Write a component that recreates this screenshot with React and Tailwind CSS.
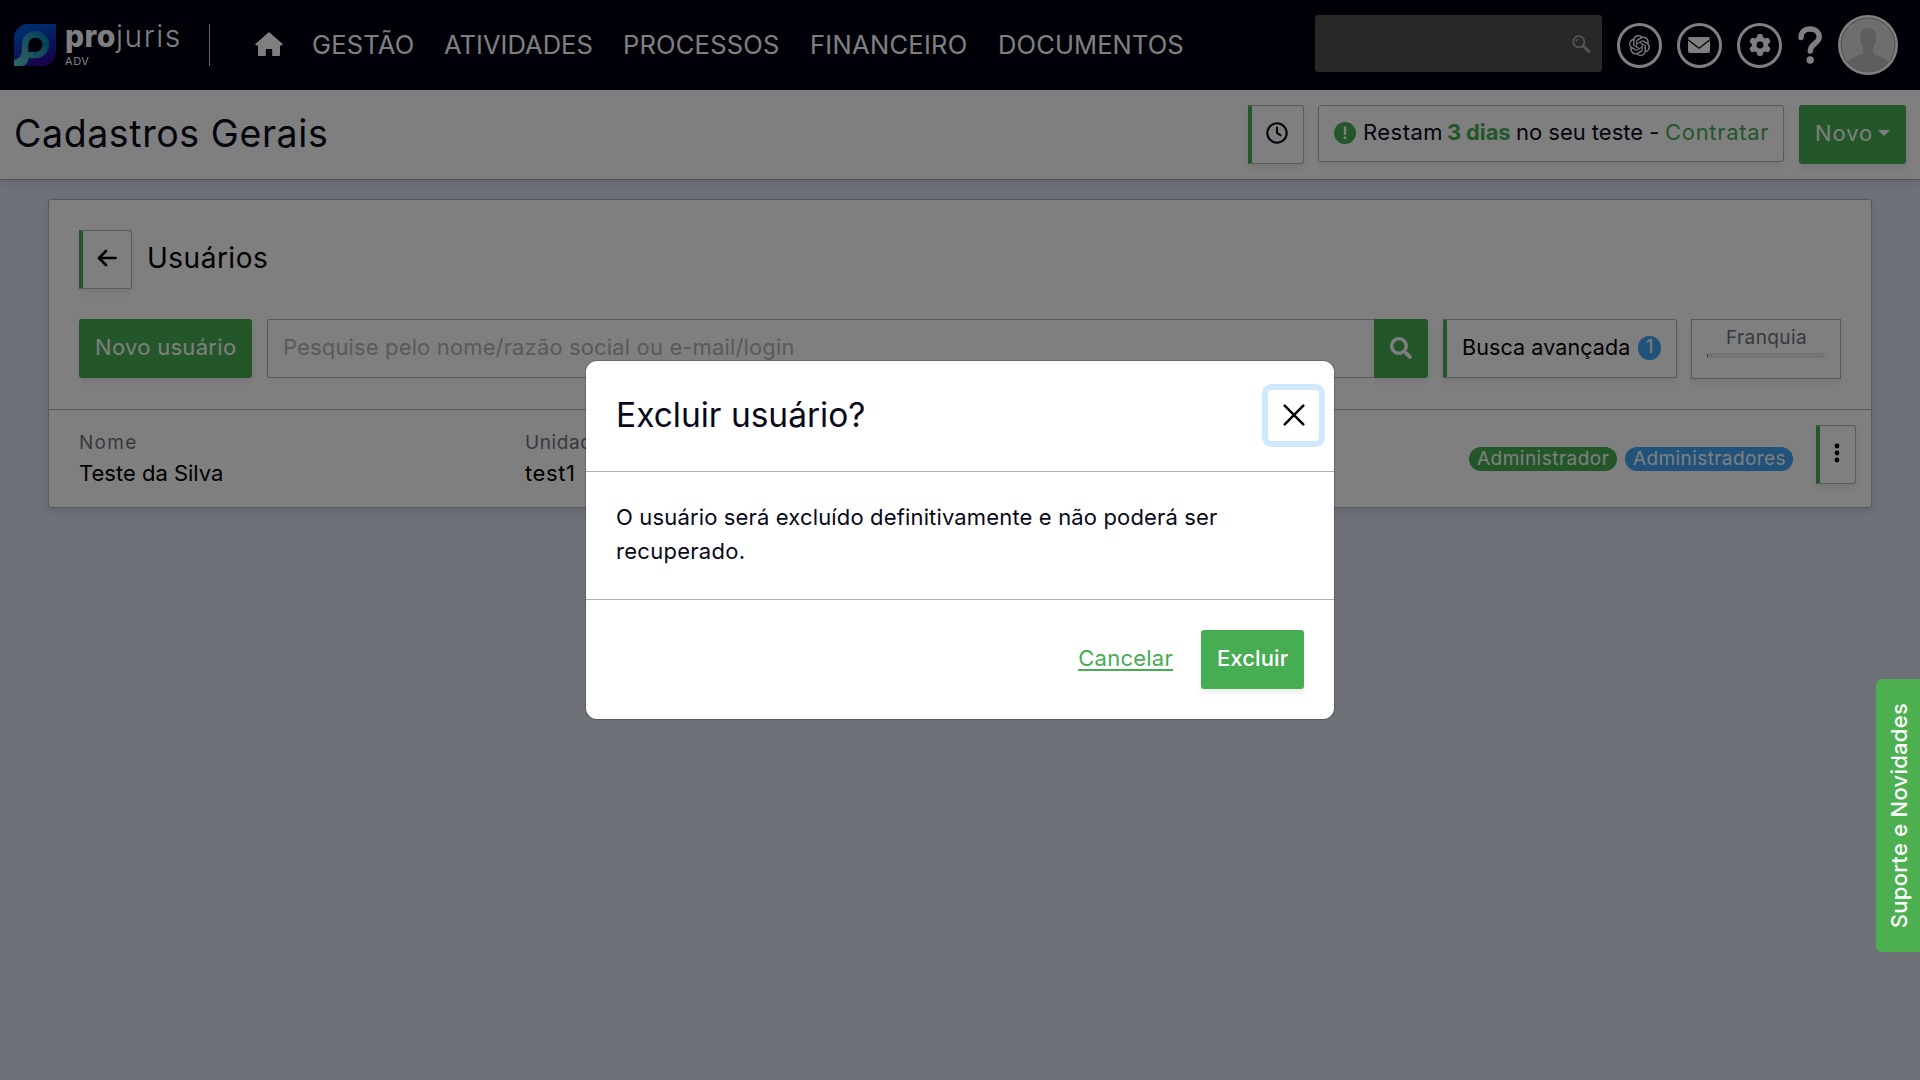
import React from "react";
import { SiOpenai } from "react-icons/si";
import { FaGear } from "react-icons/fa6";
import { FaSearch } from "react-icons/fa";

const Logo = () => (
  <svg width="42" height="42" viewBox="0 0 42 42" className="mt-6 shrink-0">
    <defs>
      <linearGradient id="logoBg" x1="0.3" y1="0" x2="0.7" y2="1">
        <stop offset="0.15" stopColor="#0058d8" />
        <stop offset="0.9" stopColor="#2c0898" />
      </linearGradient>
      <linearGradient id="logoP" x1="0" y1="1" x2="1" y2="0.3">
        <stop offset="0" stopColor="#62ccd0" />
        <stop offset="0.45" stopColor="#42a8bc" />
        <stop offset="1" stopColor="#0a84b8" />
      </linearGradient>
    </defs>
    <path d="M14 0H42V28A14 14 0 0 1 28 42H0V14A14 14 0 0 1 14 0Z" fill="url(#logoBg)" />
    <path
      fillRule="evenodd"
      d="M21.5 7A13.6 13.6 0 0 1 21.5 34.2H14.5C14.3 39 11.5 42 7 42H0V36C4.500 35 7.900 32 7.900 26V20.600A13.600 13.600 0 0 1 21.500 7ZM21.500 13.800A7 7 0 0 0 14.500 20.800V27.800H21.500A7 7 0 0 0 21.500 13.800Z"
      fill="url(#logoP)"
    />
    <path d="M21.500 13.800A7 7 0 0 0 14.500 20.800V27.800H21.500A7 7 0 0 0 21.500 13.800Z" fill="#000012" />
    <path d="M28.500 20.500H35M21.500 28V34" stroke="#0a6cae" strokeWidth="0.8" />
  </svg>
);

const Home = () => (
  <svg width="28" height="24" viewBox="0 0 28 24" fill="currentColor" className="mt-8 shrink-0">
    <path d="M14 0 28 12.300 26.800 13.600H25V23Q25 24 24 24H17.200V18Q17.200 17 16.200 17H11.800Q10.800 17 10.800 18V24H4Q3 24 3 23V13.600H1.200L0 12.300Z" />
  </svg>
);

const Mail = () => (
  <svg width="22" height="16" viewBox="0 0 22 16" className="-ml-px -mt-px">
    <rect width="22" height="16" rx="2" fill="currentColor" />
    <path d="M0 2.800 11 11.200 22 2.800" fill="none" stroke="#000012" strokeWidth="1.300" />
  </svg>
);

const Round = ({ children }) => (
  <div className="flex h-[45px] w-[45px] shrink-0 items-center justify-center rounded-full border-[3px] border-white">
    {children}
  </div>
);

const Avatar = () => (
  <svg width="60" height="60" viewBox="0 0 60 60" className="shrink-0">
    <defs>
      <clipPath id="av">
        <circle cx="30" cy="30" r="27" />
      </clipPath>
    </defs>
    <circle cx="30" cy="30" r="30" fill="#fff" />
    <circle cx="30" cy="30" r="27" fill="#dcdcdc" stroke="#888" strokeWidth="0.800" />
    <path
      clipPath="url(#av)"
      fill="#bcbcbc"
      d="M30 13C35.500 13 38.500 17 38 23C37.600 28 36.500 31 35 33V38C38 42 49 41 50.500 48V60H9.500V48C11 41 22 42 25 38V33C23.500 31 22.400 28 22.400 23C22 17 24.500 13 30 13Z"
    />
  </svg>
);

const BOX = "shadow-[0_4px_6px_rgba(0,0,0,0.08)]";

function Header() {
  return (
    <header className="flex h-[90px] bg-[#000012] pl-[14px] text-white">
      <Logo />
      <div className="ml-2 w-[145px] shrink-0 pt-[18px]">
        <div className="flex h-9 items-center whitespace-nowrap pl-px text-[30px] leading-9">
          <span className="w-[51px] font-extrabold tracking-[0.4px]">pro</span>
          <span className="font-light tracking-[1.5px]">juris</span>
        </div>
        <div className="pl-px pt-px text-[11px] leading-3 tracking-[0.6px]">ADV</div>
      </div>
      <div className="mt-6 h-[42px] w-px shrink-0 bg-[#c8c8c8]" />
      <div className="ml-[45px] flex">
        <Home />
      </div>
      <nav className="ml-[29px] flex h-[90px] shrink-0 items-center whitespace-nowrap text-[25.5px]">
        <span className="w-[132px] tracking-[0.2px]">GESTÃO</span>
        <span className="w-[179px] tracking-[0.05px]">ATIVIDADES</span>
        <span className="w-[187px] tracking-[0.2px]">PROCESSOS</span>
        <span className="w-[188px] tracking-[0.3px]">FINANCEIRO</span>
        <span className="w-[190px] tracking-[0.12px]">DOCUMENTOS</span>
      </nav>
      <div className="ml-auto flex items-center pr-[22px]">
        <div className="mb-[3px] flex h-[57px] w-[287px] items-center justify-end rounded-[3px] bg-[#505050] pr-[11px]">
          <svg width="19" height="18" viewBox="0 0 19 18" fill="none" stroke="#a6a6a6">
            <circle cx="6.800" cy="6.800" r="5.600" strokeWidth="1.800" />
            <path d="M11.500 11.200 17 16.300" strokeWidth="3" strokeLinecap="round" />
            <path d="M4 6.800A2.800 2.800 0 0 1 6.800 4" strokeWidth="1" />
          </svg>
        </div>
        <div className="ml-[15px] flex gap-[15px]">
          <Round>
            <SiOpenai size={21} />
          </Round>
          <Round>
            <Mail />
          </Round>
          <Round>
            <FaGear size={22} className="-mt-px" />
          </Round>
        </div>
        <svg width="24" height="38" viewBox="0 0 24 38" className="ml-4 mr-4" fill="none">
          <path
            d="M3 11.500C3 6 6.500 3 12 3C17.500 3 21.200 6.500 21.200 11C21.200 17.500 12.300 17.500 12.300 25"
            stroke="currentColor"
            strokeWidth="5.400"
            strokeLinecap="round"
          />
          <circle cx="12.200" cy="34" r="3.700" fill="currentColor" />
        </svg>
        <Avatar />
      </div>
    </header>
  );
}

function TitleBar() {
  return (
    <div className="relative flex h-[90px] items-start justify-between border-b border-[#a6acac] bg-white pl-[14px] pr-[14px] pt-[15px] shadow-[0_3px_8px_rgba(0,0,0,0.1)]">
      <h1 className="h-[57px] text-[37.5px] leading-[57px] tracking-[0.6px]">Cadastros Gerais</h1>
      <div className="flex items-start whitespace-nowrap text-[22px]">
        <div className={`flex h-[59px] w-[56px] items-center justify-center rounded-r-[3px] border border-l-4 border-[#b0b0bb] border-l-[#47ad53] pb-[3px] pr-px ${BOX}`}>
          <svg width="24" height="24" viewBox="0 0 24 24" fill="none" stroke="currentColor" strokeWidth="2.100" strokeLinecap="round">
            <circle cx="12" cy="12" r="9.700" />
            <path d="M12 6.500V12L15.600 14.300" />
          </svg>
        </div>
        <div className={`ml-[14px] flex h-[57px] w-[466px] items-center rounded-[3px] border border-[#b0b0bb] pb-[2px] pl-[15px] ${BOX}`}>
          <svg width="22" height="22" viewBox="0 0 22 22">
            <circle cx="11" cy="11" r="11" fill="#47ad53" />
            <path d="M11 5.500V11.800" stroke="#fff" strokeWidth="2.500" strokeLinecap="round" />
            <circle cx="11" cy="15.800" r="1.500" fill="#fff" />
          </svg>
          <span className="ml-[7px] w-[84px] tracking-[0.46px]">Restam</span>
          <span className="w-[69px] font-bold tracking-[-0.15px] text-[#47ad53]">3 dias</span>
          <span className="w-[149px] tracking-[-0.02px]">no seu teste -</span>
          <span className="tracking-[0.7px] text-[#47ad53]">Contratar</span>
        </div>
        <div className={`ml-[15px] flex h-[59px] w-[107px] items-center rounded-[3px] bg-[#47ad53] pb-[2px] pl-4 text-white ${BOX}`}>
          <span className="w-[63px] tracking-[0.9px]">Novo</span>
          <svg width="12" height="6" viewBox="0 0 12 6" fill="currentColor" className="mb-[2px]">
            <path d="M0 0H12L6 6Z" />
          </svg>
        </div>
      </div>
    </div>
  );
}

function Card() {
  return (
    <section className="mx-12 mt-[19px] h-[309px] rounded-[3px] border border-[#b0b0bb] bg-white shadow-[0_3px_8px_rgba(0,0,0,0.1)]">
      <div className="h-[210px] border-b border-[#b0b0bb] px-[30px] pt-[30px]">
        <div className="flex items-center">
          <div className={`flex h-[59px] w-[53px] items-center justify-center rounded-r-[3px] border border-l-4 border-[#b0b0bb] border-l-[#47ad53] pb-[3px] ${BOX}`}>
            <svg width="20" height="18" viewBox="0 0 20 18" fill="none" stroke="#000" strokeWidth="2.700" strokeLinecap="round" strokeLinejoin="round">
              <path d="M18.500 9H2.500M9 2 2 9 9 16" />
            </svg>
          </div>
          <h2 className="ml-[15px] pb-[3px] text-[28px] leading-9 tracking-[0.5px] text-black">Usuários</h2>
        </div>
        <div className="mt-[30px] flex items-start whitespace-nowrap text-[22px]">
          <div className={`flex h-[59px] w-[173px] items-center rounded-[3px] bg-[#47ad53] pb-[2px] pl-4 tracking-[0.3px] text-white ${BOX}`}>
            Novo usuário
          </div>
          <div className="ml-[15px] flex h-[59px] w-[1107px] items-center rounded-l-[3px] border border-r-0 border-[#b0b0bb] pb-[2px] pl-[15px] tracking-[0.14px] text-[#b4b4b4]">
            Pesquise pelo nome/razão social ou e-mail/login
          </div>
          <div className={`flex h-[59px] w-[54px] items-center justify-center rounded-r-[3px] bg-[#47ad53] pb-[2px] text-white ${BOX}`}>
            <FaSearch size={22} />
          </div>
          <div className={`ml-[15px] flex h-[59px] w-[234px] items-center rounded-r-[3px] border border-l-4 border-[#b0b0bb] border-l-[#47ad53] pb-[2px] pl-[15px] text-[21.5px] text-black ${BOX}`}>
            <span className="w-[176px] tracking-[0.1px]">Busca avançada</span>
            <span className="flex h-6 w-[23px] items-center justify-center rounded-full bg-[#42a5f5] text-[19px] text-white">1</span>
          </div>
          <div className={`ml-[14px] flex h-[60px] w-[150px] flex-col border border-[#b0b0bb] px-[15px] pt-[5px] ${BOX}`}>
            <span className="pl-[19px] text-[19px] leading-[25px] tracking-[0.4px] text-[#6c757d]">Franquia</span>
            <span className="mt-[3px] flex h-[5px] w-[118px] overflow-hidden rounded-[3px] bg-[#e6e9ec]">
              <span className="h-full w-px bg-[#e53935]" />
            </span>
          </div>
        </div>
      </div>
      <div className="flex whitespace-nowrap pl-[30px] pr-[15px] pt-[15px]">
        <div className="w-[446px] pt-[5px]">
          <div className="text-[19px] leading-[25px] tracking-[1.3px] text-[#6c757d]">Nome</div>
          <div className="pt-[3px] text-[22px] leading-[30px] text-black">Teste da Silva</div>
        </div>
        <div className="pt-[5px]">
          <div className="text-[19px] leading-[25px] tracking-[0.6px] text-[#6c757d]">Unidade</div>
          <div className="pt-[3px] text-[22px] leading-[30px] tracking-[0.6px] text-black">test1</div>
        </div>
        <div className="ml-auto flex items-start text-[19px] leading-6 text-white">
          <span className="mt-[22px] h-6 w-[148px] rounded-full bg-[#47ad53] pl-2 tracking-[0.48px]">Administrador</span>
          <span className="ml-2 mt-[22px] h-6 w-[168px] rounded-full bg-[#42a5f5] pl-2 tracking-[0.4px]">Administradores</span>
          <div className={`ml-[23px] flex h-[59px] w-10 items-center justify-center rounded-r-[3px] border border-l-4 border-[#b0b0bb] border-l-[#47ad53] pb-1 ${BOX}`}>
            <svg width="6" height="20" viewBox="0 0 6 20" fill="#000" className="-ml-px">
              <circle cx="3" cy="3" r="2.400" />
              <circle cx="3" cy="10" r="2.400" />
              <circle cx="3" cy="17" r="2.400" />
            </svg>
          </div>
        </div>
      </div>
    </section>
  );
}

function Modal() {
  return (
    <div className="h-[358px] w-[748px] overflow-hidden rounded-[11px] bg-white shadow-[0_0_0_1px_rgba(0,0,0,0.18)]">
      <div className="flex h-[111px] items-center justify-between border-b border-[#b0b0bb] pb-px pl-[30px] pr-[15px]">
        <h3 className="pb-px text-[33.5px] leading-10">Excluir usuário?</h3>
        <div className="flex h-[51px] w-[51px] items-center justify-center rounded-[4px] pb-px shadow-[0_0_0_6px_#d0e8fc]">
          <svg width="22" height="22" viewBox="0 0 22 22" stroke="#000" strokeWidth="2.500" strokeLinecap="round">
            <path d="M1.700 1.700 20.300 20.300M20.300 1.700 1.700 20.300" />
          </svg>
        </div>
      </div>
      <div className="h-[128px] whitespace-nowrap border-b border-[#b0b0bb] pl-[30px] pt-[28px] text-[22px] leading-[34px]">
        <p className="tracking-[0.15px]">O usuário será excluído definitivamente e não poderá ser</p>
        <p className="tracking-[0.28px]">recuperado.</p>
      </div>
      <div className="flex justify-end pr-[30px] pt-[30px] text-[22px]">
        <span className="mr-7 mt-[13px] h-[30px] leading-[30px] tracking-[0.25px] text-[#47ad53] underline decoration-2 underline-offset-[3px]">
          Cancelar
        </span>
        <div className={`flex h-[59px] w-[103px] items-center rounded-[3px] bg-[#47ad53] pb-[2px] pl-4 font-medium tracking-[0.1px] text-white ${BOX}`}>
          Excluir
        </div>
      </div>
    </div>
  );
}

export default function App() {
  return (
    <div className="relative h-[1080px] w-[1920px] overflow-hidden bg-[#dde2f1] font-['Inter',sans-serif] text-[#08081a]">
      <Header />
      <TitleBar />
      <Card />
      <div className="absolute inset-0 flex items-center justify-center bg-black/50">
        <Modal />
      </div>
      <div className="absolute right-0 top-[679px] flex h-[273px] w-[44px] items-center justify-center rounded-l-[6px] bg-[#4caf50] pl-px">
        <span className="rotate-180 whitespace-nowrap text-[22px] font-medium leading-7 tracking-[0.26px] text-white [writing-mode:vertical-rl]">
          Suporte e Novidades
        </span>
      </div>
    </div>
  );
}
